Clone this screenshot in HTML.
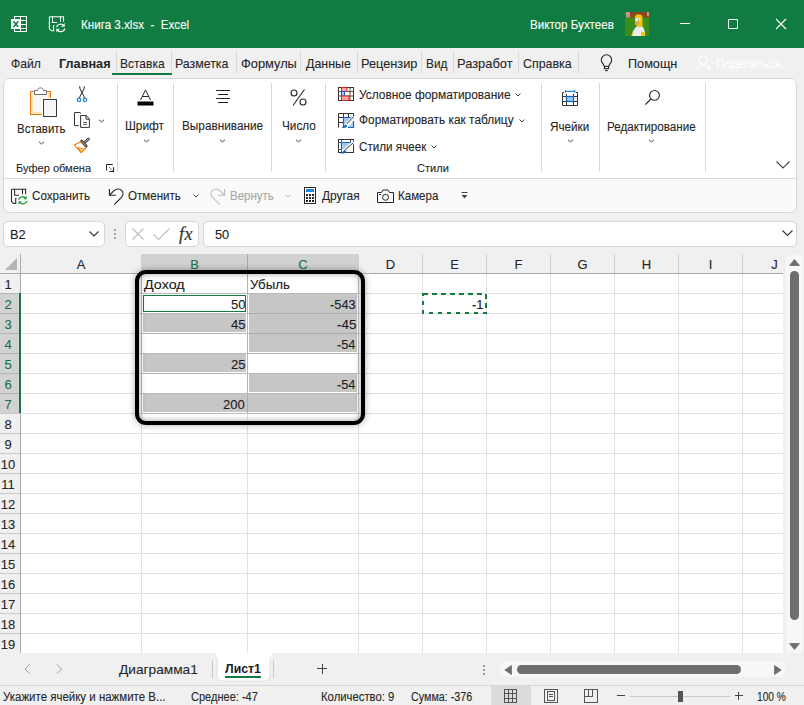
<!DOCTYPE html>
<html><head><meta charset="utf-8">
<style>
*{margin:0;padding:0;box-sizing:border-box}
html,body{width:804px;height:705px;overflow:hidden;background:#f0f0f0;font-family:"Liberation Sans",sans-serif;color:#262626;position:relative}
.a{position:absolute}
.t{position:absolute;white-space:pre;line-height:1;-webkit-text-stroke:0.1px currentColor}
svg{position:absolute;overflow:visible}
#title{left:0;top:0;width:804px;height:48px;background:#107c41}
#title .t{color:#fff}
.sep{position:absolute;width:1px;background:#d4d4d4}
</style></head><body>
<!-- TITLE BAR -->
<div id="title" class="a">
  <svg style="left:10px;top:15px" width="18" height="18" viewBox="0 0 18 18" fill="none" stroke="#fff" stroke-width="1">
    <rect x="4.5" y="1.5" width="12" height="15" />
    <line x1="4.5" y1="5.5" x2="16.5" y2="5.5"/><line x1="4.5" y1="9.5" x2="16.5" y2="9.5"/><line x1="4.5" y1="13.5" x2="16.5" y2="13.5"/>
    <line x1="10.5" y1="1.5" x2="10.5" y2="16.5"/>
    <rect x="1" y="4" width="9.3" height="10" fill="#fff" stroke="none"/>
    <path d="M3.5 6.3 L8.3 12.1 M8.3 6.3 L3.5 12.1" stroke="#107c41" stroke-width="1.5"/>
  </svg>
  <svg style="left:44px;top:12px" width="24" height="24" viewBox="0 0 24 24" fill="none">
  <g transform="translate(1.9,-0.5)">
  <path d="M3.5 5.2 H17.6 V10.3 M3.5 5.2 V17.3 L5.5 19.3 H8.5" stroke="#fff" stroke-width="1.1"/>
  <path d="M6.6 5.2 V11 H11 M14.6 5.2 V10.3 M8.6 14 H7.6 V19.3" stroke="#fff" stroke-width="1.1"/>
  <path d="M10.6 15.6 A4.3 4.3 0 0 1 18 14.2 M19 17 A4.3 4.3 0 0 1 11.5 18.6" stroke="#fff" stroke-width="1.2"/>
  <path d="M18.8 11.6 V15.3 H15.2 Z M10.4 20.8 V17.2 H14 Z" fill="#fff"/>
  </g>
</svg>
  <svg style="left:625px;top:12px" width="24" height="24" viewBox="0 0 24 24">
    <rect width="24" height="24" fill="#3c8c1c"/>
    <rect width="24" height="5.5" fill="#8a4526"/>
    <rect x="1" y="0" width="4" height="5.5" fill="#c49a76"/>
    <rect x="22" y="0" width="2" height="4" fill="#c49a76"/>
    <rect x="0" y="1" width="1" height="1.5" fill="#f07010"/>
    <path d="M10 5 C10 1.5 17.5 1.2 17.5 5.5 V14 H12 V13.5 C10 13.5 9.5 11 10 9 Z" fill="#f5c400"/>
    <ellipse cx="12.8" cy="7.5" rx="2.8" ry="1.6" fill="#f4f4f4"/>
    <circle cx="13.6" cy="7.8" r="0.6" fill="#333"/>
    <path d="M10 9.5 C9.8 12.5 11 14 13.5 14 C14.8 13 14.5 10.5 13.5 9.5 Z" fill="#caa860"/>
    <rect x="12" y="12.5" width="5" height="3" fill="#f5c400"/>
    <path d="M11 14.8 H18 L20 20 L19.8 24 H6.3 L8 19 Z" fill="#ececec"/>
    <rect x="16.2" y="20" width="3.4" height="4" fill="#f5c400"/>
    <rect x="7" y="21" width="1.2" height="2" fill="#f5c400"/>
  </svg>
  <div class="a" style="left:680px;top:23px;width:10px;height:1px;background:#fff"></div>
  <div class="a" style="left:728px;top:19px;width:10px;height:10px;border:1px solid #fff;border-radius:1px"></div>
  <svg style="left:776px;top:19px" width="10" height="10" viewBox="0 0 10 10" stroke="#fff" stroke-width="1.1"><path d="M0 0 L10 10 M10 0 L0 10"/></svg>
</div>

<!-- TAB ROW -->
<div class="sep" style="left:116px;top:51px;height:22px;background:#d9d9d9"></div>
<div class="sep" style="left:171px;top:51px;height:22px;background:#d9d9d9"></div>
<div class="sep" style="left:236px;top:51px;height:22px;background:#d9d9d9"></div>
<div class="sep" style="left:300px;top:51px;height:22px;background:#d9d9d9"></div>
<div class="sep" style="left:357px;top:51px;height:22px;background:#d9d9d9"></div>
<div class="sep" style="left:421px;top:51px;height:22px;background:#d9d9d9"></div>
<div class="sep" style="left:453px;top:51px;height:22px;background:#d9d9d9"></div>
<div class="sep" style="left:518px;top:51px;height:22px;background:#d9d9d9"></div>
<div class="sep" style="left:578px;top:51px;height:22px;background:#d9d9d9"></div>
<div class="a" style="left:112px;top:73px;width:60px;height:2px;background:#107c41"></div>
<svg style="left:594px;top:52px" width="24" height="24" viewBox="0 0 24 24" fill="none" stroke="#262626" stroke-width="1.1">
  <path d="M10.4 14.2 L9 11.8 C7.8 10.3 7.3 9.2 7.3 8 A5.2 5.2 0 0 1 17.7 8 C17.7 9.2 17.2 10.3 16 11.8 L14.6 14.2"/>
  <rect x="10.4" y="14.4" width="4.2" height="2.2"/>
  <path d="M11.2 18.5 H13.8" stroke-width="1.2"/>
</svg>
<svg style="left:696px;top:55px" width="17" height="16" viewBox="0 0 17 16" fill="none" stroke="#ffffff" stroke-width="1.2">
  <circle cx="7" cy="5" r="4"/><path d="M1 15.5 C1 11.5 4 9.5 7 9.5 C8.5 9.5 9.5 10 10.5 10.5"/>
  <path d="M13 10 V16 M10 13 H16"/>
</svg>

<!-- RIBBON -->
<div class="a" style="left:3px;top:78px;width:794px;height:135px;border:1px solid #d6d6d6;border-radius:7px;background:#fafafa;overflow:hidden">
  <div class="a" style="left:0;top:0;width:792px;height:100px;background:#fff;border-bottom:1px solid #d9d9d9"></div>
</div>
<div class="sep" style="left:117px;top:83px;height:89px;background:#d9d9d9"></div>
<div class="sep" style="left:173px;top:83px;height:89px;background:#d9d9d9"></div>
<div class="sep" style="left:271px;top:83px;height:89px;background:#d9d9d9"></div>
<div class="sep" style="left:325px;top:83px;height:89px;background:#d9d9d9"></div>
<div class="sep" style="left:541px;top:83px;height:89px;background:#d9d9d9"></div>
<div class="sep" style="left:599px;top:83px;height:89px;background:#d9d9d9"></div>
<div class="sep" style="left:705px;top:83px;height:89px;background:#d9d9d9"></div>

<!-- clipboard group -->
<svg style="left:26px;top:84px" width="34" height="36" viewBox="0 0 34 36" fill="none">
  <rect x="4.5" y="7.5" width="20" height="23" fill="#f8f8f8" stroke="#e8740c" stroke-width="1"/>
  <path d="M6 9 V29 H16 M23 9 V14" stroke="#fbe0a0" stroke-width="1.6"/>
  <path d="M8.5 10.5 V6.5 H11.5 C11.5 3 17.5 3 17.5 6.5 H20.5 V10.5 Z" fill="#fff" stroke="#6e6e6e" stroke-width="1"/>
  <rect x="16" y="14" width="16" height="19" fill="#fff"/>
  <rect x="17.5" y="15.5" width="13" height="17" fill="#f6f6f6" stroke="#3a3a3a" stroke-width="1"/>
</svg>
<svg style="left:38px;top:141px" width="7" height="4" viewBox="0 0 7 4" fill="none" stroke="#444" stroke-width="1"><path d="M1 0.8 L3.5 3 L6 0.8"/></svg>
<svg style="left:72px;top:82px" width="20" height="22" viewBox="0 0 20 22" fill="none">
  <path d="M7.5 4.3 C7.5 6.5 8.5 8 10 10.5 C11.5 13 12 14 12.5 16" stroke="#3a3a3a" stroke-width="1.05"/>
  <path d="M12.5 4.3 C12.5 6.5 11.5 8 10 10.5 C8.5 13 8 14 7.5 16" stroke="#3a3a3a" stroke-width="1.05"/>
  <rect x="5.3" y="16.2" width="3.4" height="3.4" rx="1.5" fill="#d9ecfb" stroke="#1e88d8" stroke-width="1.2"/>
  <rect x="11.3" y="16.2" width="3.4" height="3.4" rx="1.5" fill="#d9ecfb" stroke="#1e88d8" stroke-width="1.2"/>
</svg>
<svg style="left:70px;top:108px" width="24" height="24" viewBox="0 0 24 24" fill="none" stroke="#333" stroke-width="1">
  <path d="M8.8 17.6 H4.5 V4.5 H9.8 L11.2 5.5"/>
  <path d="M10.6 7.5 H16 L19.4 10.8 V19.4 H10.6 Z" fill="#fff"/>
  <path d="M16 7.5 V11.2 H19.4"/>
  <path d="M13.2 14.4 H16.8 M13.2 16.4 H16.8" stroke-width="0.9"/>
</svg>
<svg style="left:98px;top:119px" width="7" height="4" viewBox="0 0 7 4" fill="none" stroke="#444" stroke-width="1"><path d="M1 0.8 L3.5 3 L6 0.8"/></svg>
<svg style="left:70px;top:134px" width="24" height="24" viewBox="0 0 24 24" fill="none">
  <path d="M10.8 7.8 L4.3 11 L11.2 18.6 L16.2 13.6 Z" fill="#fff" stroke="#e8740c" stroke-width="1.1" stroke-linejoin="round"/>
  <path d="M8 13.5 L14.5 15.3 L11.2 18.4 Z" fill="#f9d97a" stroke="#e8740c" stroke-width="0.9"/>
  <path d="M14 9.3 L18.6 4.8" stroke="#333" stroke-width="2.6" stroke-linecap="round"/>
  <path d="M14 9.3 L18.6 4.8" stroke="#fff" stroke-width="0.9" stroke-linecap="round"/>
  <path d="M11.6 6.8 L16.3 12" stroke="#333" stroke-width="2.4" stroke-linecap="round"/>
  <path d="M11.8 7.2 L16 11.7" stroke="#fff" stroke-width="0.7"/>
</svg>
<svg style="left:102px;top:160px" width="16" height="16" viewBox="0 0 16 16" fill="none" stroke="#262626">
  <path d="M4.5 10.5 V4.5 H10.8" stroke-width="1"/>
  <path d="M7.4 7.4 L10.8 10.8" stroke-width="1" stroke-dasharray="0.9 0.6"/>
  <path d="M7.3 11.5 H11.5 V7.3" stroke-width="1.1"/>
</svg>

<!-- font group -->
<svg style="left:137px;top:89px" width="17" height="17" viewBox="0 0 17 17" fill="none">
  <path d="M3.5 11 L8.5 1 L13.5 11 M5.2 7.5 H11.8" stroke="#262626" stroke-width="1"/>
  <rect x="0.5" y="12.5" width="16" height="4" fill="#000"/>
</svg>
<svg style="left:143px;top:139px" width="7" height="4" viewBox="0 0 7 4" fill="none" stroke="#444" stroke-width="1"><path d="M1 0.8 L3.5 3 L6 0.8"/></svg>

<!-- align group -->
<svg style="left:215px;top:90px" width="16" height="15" viewBox="0 0 16 15" fill="none" stroke="#262626" stroke-width="1">
  <path d="M1 0.5 H15 M3 4.5 H13 M1 8.5 H15 M3 12.5 H13"/>
</svg>
<svg style="left:219px;top:139px" width="7" height="4" viewBox="0 0 7 4" fill="none" stroke="#444" stroke-width="1"><path d="M1 0.8 L3.5 3 L6 0.8"/></svg>

<!-- number group -->
<svg style="left:290px;top:89px" width="18" height="17" viewBox="0 0 18 17" fill="none" stroke="#262626" stroke-width="1.1">
  <circle cx="4" cy="4" r="3"/><circle cx="13" cy="13" r="3"/><path d="M14.5 0.5 L3 16.5"/>
</svg>
<svg style="left:295px;top:139px" width="7" height="4" viewBox="0 0 7 4" fill="none" stroke="#444" stroke-width="1"><path d="M1 0.8 L3.5 3 L6 0.8"/></svg>

<!-- styles group -->
<svg style="left:338px;top:87px" width="17" height="15" viewBox="0 0 17 15" fill="none">
  <rect x="0.5" y="0.5" width="15" height="13" fill="#fff" stroke="#333" stroke-width="1"/>
  <path d="M0.5 4.5 H15.5 M0.5 9 H15.5 M12 0.5 V13.5" stroke="#555" stroke-width="1"/>
  <rect x="3.5" y="0.5" width="5.5" height="4" fill="#f6a3a3" stroke="#e3241b" stroke-width="1"/>
  <rect x="3.5" y="4.5" width="3" height="4.5" fill="#9dcaf2" stroke="#1565c0" stroke-width="1"/>
  <rect x="3.5" y="9" width="7.5" height="4.5" fill="#f6a3a3" stroke="#e3241b" stroke-width="1"/>
</svg>
<svg style="left:515px;top:93px" width="6" height="4" viewBox="0 0 6 4" fill="none" stroke="#444" stroke-width="1"><path d="M0.5 0.5 L3 3 L5.5 0.5"/></svg>
<svg style="left:338px;top:113px" width="17" height="16" viewBox="0 0 17 16" fill="none">
  <path d="M0.5 14.5 V0.5 H15.5 V3.5 M0.5 4.5 H5 M0.5 9.5 H5 M5.5 0.5 V4.5 M10.5 0.5 V4.5 M5 4.5 H15" stroke="#333" stroke-width="1"/>
  <path d="M5.5 14 V4.5 H15 M15.5 8 V14.5 H10" stroke="#1466c0" stroke-width="1.2"/>
  <path d="M6 5 H13 L6 12 Z" fill="#9dcaf2"/>
  <path d="M15 9 V14 H10 Z" fill="#9dcaf2"/>
  <path d="M8.5 11 L15.5 4" stroke="#fff" stroke-width="3"/>
  <path d="M9 10.5 L15.5 4" stroke="#555" stroke-width="1.6" stroke-dasharray="1 0.6"/>
  <path d="M3 14.5 C5 14.5 6 12.5 7.5 11.5 L9.5 13 C8.5 14.8 6 15.5 3 14.5 Z" fill="#1466c0"/>
</svg>
<svg style="left:519px;top:119px" width="6" height="4" viewBox="0 0 6 4" fill="none" stroke="#444" stroke-width="1"><path d="M0.5 0.5 L3 3 L5.5 0.5"/></svg>
<svg style="left:338px;top:139px" width="17" height="16" viewBox="0 0 17 16" fill="none">
  <rect x="0.5" y="0.5" width="15" height="13" fill="#fff" stroke="#333" stroke-width="1"/>
  <path d="M0.5 3.5 H3.5 M0.5 10.5 H3.5 M3.5 0.5 V3.5 M12.5 0.5 V3.5 M3.5 13.5 V10.5" stroke="#555" stroke-width="1"/>
  <path d="M3.5 10.5 V3.5 H12.5" stroke="#1466c0" stroke-width="1.2"/>
  <path d="M4 4 H12 L5 10.5 H4 Z" fill="#9dcaf2"/>
  <path d="M6.5 11.5 L16 3" stroke="#fff" stroke-width="3"/>
  <path d="M7 11 L15.5 3.5" stroke="#555" stroke-width="1.6" stroke-dasharray="1 0.6"/>
  <path d="M2 14 C4 14 5 12 6.5 11 L8.5 12.5 C7.5 14.5 5 15.2 2 14 Z" fill="#1466c0"/>
</svg>
<svg style="left:431px;top:145px" width="6" height="4" viewBox="0 0 6 4" fill="none" stroke="#444" stroke-width="1"><path d="M0.5 0.5 L3 3 L5.5 0.5"/></svg>

<!-- cells group -->
<svg style="left:562px;top:89px" width="17" height="18" viewBox="0 0 17 18" fill="none">
  <path d="M3.5 2.4 H12.8 M3.5 1 V3.8 M12.8 1 V3.8" stroke="#1e88d8" stroke-width="1.1"/>
  <path d="M2 3.5 H0.5 V16.5 H15.5 V3.5 H14 M0.5 7.5 H15.5 M0.5 12.5 H15.5 M4.5 5 V16.5 M11.5 5 V16.5" stroke="#333" stroke-width="1"/>
  <rect x="4.5" y="7.5" width="7" height="5" fill="#9dcaf2" stroke="#1466c0" stroke-width="1.3"/>
</svg>
<svg style="left:567px;top:139px" width="7" height="4" viewBox="0 0 7 4" fill="none" stroke="#444" stroke-width="1"><path d="M1 0.8 L3.5 3 L6 0.8"/></svg>

<!-- editing group -->
<svg style="left:640px;top:86px" width="24" height="24" viewBox="0 0 24 24" fill="none" stroke="#262626" stroke-width="1.1">
  <circle cx="14.5" cy="9.35" r="4.9"/><path d="M10.9 13 L5.3 18.7"/>
</svg>
<svg style="left:648px;top:139px" width="7" height="4" viewBox="0 0 7 4" fill="none" stroke="#444" stroke-width="1"><path d="M1 0.8 L3.5 3 L6 0.8"/></svg>

<svg style="left:776px;top:161px" width="14" height="8" viewBox="0 0 14 8" fill="none" stroke="#444" stroke-width="1.1"><path d="M0.5 0.5 L7 7 L13.5 0.5"/></svg>

<!-- QAT -->
<svg style="left:8px;top:184px" width="24" height="24" viewBox="0 0 24 24" fill="none">
  <path d="M3.5 5.2 H17.6 V10.3 M3.5 5.2 V17.6 L5.5 19.5 H8.3" stroke="#262626" stroke-width="1.05"/>
  <path d="M6.6 5.2 V11.3 H11 M14.5 5.2 V10.3 M8.5 14.6 H7.7 V19.5" stroke="#262626" stroke-width="1.05"/>
  <path d="M10.5 15.6 A4.3 4.3 0 0 1 18 14.5 M19 17 A4.3 4.3 0 0 1 11.5 18.2" stroke="#1e9e3e" stroke-width="1.3"/>
  <path d="M18.6 11.8 V15.3 H15.4 Z M10.4 20.6 V17.2 H13.6 Z" fill="#1e9e3e"/>
</svg>
<svg style="left:104px;top:184px" width="24" height="24" viewBox="0 0 24 24" fill="none" stroke="#262626" stroke-width="1.15">
  <path d="M5.4 5 V11.2 H11.8"/><path d="M5.7 11 L10 6.6 C12.5 4.4 16 4.4 17.8 6.6 C19.6 8.6 19.2 11.6 17.2 13.6 L10.2 20.6"/>
</svg>
<svg style="left:193px;top:194px" width="6" height="4" viewBox="0 0 6 4" fill="none" stroke="#444" stroke-width="1"><path d="M0.5 0.5 L3 3 L5.5 0.5"/></svg>
<svg style="left:206px;top:184px" width="24" height="24" viewBox="0 0 24 24" fill="none" stroke="#bdbdbd" stroke-width="1.15">
  <path d="M18.6 5 V11.2 H12.2"/><path d="M18.3 11 L14 6.6 C11.5 4.4 8 4.4 6.2 6.6 C4.4 8.6 4.8 11.6 6.8 13.6 L13.8 20.6"/>
</svg>
<svg style="left:285px;top:194px" width="6" height="4" viewBox="0 0 6 4" fill="none" stroke="#b8b8b8" stroke-width="1"><path d="M0.5 0.5 L3 3 L5.5 0.5"/></svg>
<svg style="left:304px;top:187px" width="12" height="17" viewBox="0 0 12 17" fill="none">
  <rect x="0.5" y="0.5" width="11" height="16" stroke="#262626" stroke-width="1" fill="#fff"/>
  <rect x="2" y="2" width="8" height="3" fill="#1e88e5"/>
  <g fill="#262626"><rect x="2" y="7" width="2" height="2"/><rect x="5" y="7" width="2" height="2"/><rect x="8" y="7" width="2" height="2"/>
  <rect x="2" y="10" width="2" height="2"/><rect x="5" y="10" width="2" height="2"/><rect x="8" y="10" width="2" height="2"/>
  <rect x="2" y="13" width="2" height="2"/><rect x="5" y="13" width="2" height="2"/><rect x="8" y="13" width="2" height="2"/></g>
</svg>
<svg style="left:377px;top:189px" width="17" height="14" viewBox="0 0 17 14" fill="none" stroke="#262626" stroke-width="1">
  <path d="M0.5 3.5 H4.5 L6 1 H11 L12.5 3.5 H16.5 V13.5 H0.5 Z"/><circle cx="8.5" cy="8.3" r="3"/><path d="M2 5.5 H4"/>
</svg>
<svg style="left:461px;top:192px" width="7" height="7" viewBox="0 0 7 7" fill="#444"><rect x="0.5" y="0" width="6" height="1"/><path d="M0.5 3 H6.5 L3.5 6.5 Z"/></svg>

<!-- FORMULA BAR -->
<div class="a" style="left:3px;top:221px;width:102px;height:26px;background:#fff;border:1px solid #d6d6d6;border-radius:5px"></div>
<svg style="left:89px;top:231px" width="10" height="6" viewBox="0 0 10 6" fill="none" stroke="#333" stroke-width="1.1"><path d="M0.5 0.5 L5 5 L9.5 0.5"/></svg>

<div class="a" style="left:114px;top:229px;width:2px;height:2px;background:#8a8a8a;border-radius:1px"></div>
<div class="a" style="left:114px;top:233px;width:2px;height:2px;background:#8a8a8a;border-radius:1px"></div>
<div class="a" style="left:114px;top:237px;width:2px;height:2px;background:#8a8a8a;border-radius:1px"></div>
<div class="a" style="left:125px;top:221px;width:74px;height:26px;background:#fff;border:1px solid #d6d6d6;border-radius:5px"></div>
<svg style="left:132px;top:228px" width="12" height="12" viewBox="0 0 12 12" fill="none" stroke="#bdbdbd" stroke-width="1.1"><path d="M0.5 0.5 L11.5 11.5 M11.5 0.5 L0.5 11.5"/></svg>
<svg style="left:153px;top:228px" width="17" height="12" viewBox="0 0 17 12" fill="none" stroke="#bdbdbd" stroke-width="1.1"><path d="M0.5 6.5 L5.5 11.5 L16.5 0.5"/></svg>
<div class="a" style="left:179px;top:225px;font:italic 18px/1 'Liberation Serif',serif;color:#333;letter-spacing:0.5px;white-space:pre;-webkit-text-stroke:0.2px #333">fx</div>
<div class="a" style="left:203px;top:221px;width:594px;height:26px;background:#fff;border:1px solid #d6d6d6;border-radius:5px"></div>
<svg style="left:782px;top:230px" width="11" height="6" viewBox="0 0 11 6" fill="none" stroke="#333" stroke-width="1.1"><path d="M0.5 0.5 L5.5 5.5 L10.5 0.5"/></svg>
<!-- GRID -->
<div class="a" style="left:21px;top:274px;width:762px;height:379px;background:#fff"></div>
<div class="a" style="left:142px;top:254px;width:216px;height:19px;background:#d2d2d2"></div>
<div class="a" style="left:0px;top:294px;width:20px;height:119px;background:#d2d2d2"></div>
<svg style="left:0;top:0" width="804" height="705" shape-rendering="crispEdges">
<line x1="141.5" y1="274" x2="141.5" y2="653" stroke="#e1e1e1"/>
<line x1="247.5" y1="274" x2="247.5" y2="653" stroke="#e1e1e1"/>
<line x1="358.5" y1="274" x2="358.5" y2="653" stroke="#e1e1e1"/>
<line x1="422.5" y1="274" x2="422.5" y2="653" stroke="#e1e1e1"/>
<line x1="486.5" y1="274" x2="486.5" y2="653" stroke="#e1e1e1"/>
<line x1="550.5" y1="274" x2="550.5" y2="653" stroke="#e1e1e1"/>
<line x1="614.5" y1="274" x2="614.5" y2="653" stroke="#e1e1e1"/>
<line x1="678.5" y1="274" x2="678.5" y2="653" stroke="#e1e1e1"/>
<line x1="742.5" y1="274" x2="742.5" y2="653" stroke="#e1e1e1"/>
<line x1="21" y1="293.5" x2="783" y2="293.5" stroke="#e1e1e1"/>
<line x1="21" y1="313.5" x2="783" y2="313.5" stroke="#e1e1e1"/>
<line x1="21" y1="333.5" x2="783" y2="333.5" stroke="#e1e1e1"/>
<line x1="21" y1="353.5" x2="783" y2="353.5" stroke="#e1e1e1"/>
<line x1="21" y1="373.5" x2="783" y2="373.5" stroke="#e1e1e1"/>
<line x1="21" y1="393.5" x2="783" y2="393.5" stroke="#e1e1e1"/>
<line x1="21" y1="413.5" x2="783" y2="413.5" stroke="#e1e1e1"/>
<line x1="21" y1="433.5" x2="783" y2="433.5" stroke="#e1e1e1"/>
<line x1="21" y1="453.5" x2="783" y2="453.5" stroke="#e1e1e1"/>
<line x1="21" y1="473.5" x2="783" y2="473.5" stroke="#e1e1e1"/>
<line x1="21" y1="493.5" x2="783" y2="493.5" stroke="#e1e1e1"/>
<line x1="21" y1="513.5" x2="783" y2="513.5" stroke="#e1e1e1"/>
<line x1="21" y1="533.5" x2="783" y2="533.5" stroke="#e1e1e1"/>
<line x1="21" y1="553.5" x2="783" y2="553.5" stroke="#e1e1e1"/>
<line x1="21" y1="573.5" x2="783" y2="573.5" stroke="#e1e1e1"/>
<line x1="21" y1="593.5" x2="783" y2="593.5" stroke="#e1e1e1"/>
<line x1="21" y1="613.5" x2="783" y2="613.5" stroke="#e1e1e1"/>
<line x1="21" y1="633.5" x2="783" y2="633.5" stroke="#e1e1e1"/>
<line x1="141.5" y1="254" x2="141.5" y2="273" stroke="#d0d0d0"/>
<line x1="247.5" y1="254" x2="247.5" y2="273" stroke="#a8a8a8"/>
<line x1="358.5" y1="254" x2="358.5" y2="273" stroke="#d0d0d0"/>
<line x1="422.5" y1="254" x2="422.5" y2="273" stroke="#d0d0d0"/>
<line x1="486.5" y1="254" x2="486.5" y2="273" stroke="#d0d0d0"/>
<line x1="550.5" y1="254" x2="550.5" y2="273" stroke="#d0d0d0"/>
<line x1="614.5" y1="254" x2="614.5" y2="273" stroke="#d0d0d0"/>
<line x1="678.5" y1="254" x2="678.5" y2="273" stroke="#d0d0d0"/>
<line x1="742.5" y1="254" x2="742.5" y2="273" stroke="#d0d0d0"/>
<line x1="0" y1="293.5" x2="20" y2="293.5" stroke="#b4b4b4"/>
<line x1="0" y1="313.5" x2="20" y2="313.5" stroke="#b4b4b4"/>
<line x1="0" y1="333.5" x2="20" y2="333.5" stroke="#b4b4b4"/>
<line x1="0" y1="353.5" x2="20" y2="353.5" stroke="#b4b4b4"/>
<line x1="0" y1="373.5" x2="20" y2="373.5" stroke="#b4b4b4"/>
<line x1="0" y1="393.5" x2="20" y2="393.5" stroke="#b4b4b4"/>
<line x1="0" y1="413.5" x2="20" y2="413.5" stroke="#c8c8c8"/>
<line x1="0" y1="433.5" x2="20" y2="433.5" stroke="#c8c8c8"/>
<line x1="0" y1="453.5" x2="20" y2="453.5" stroke="#c8c8c8"/>
<line x1="0" y1="473.5" x2="20" y2="473.5" stroke="#c8c8c8"/>
<line x1="0" y1="493.5" x2="20" y2="493.5" stroke="#c8c8c8"/>
<line x1="0" y1="513.5" x2="20" y2="513.5" stroke="#c8c8c8"/>
<line x1="0" y1="533.5" x2="20" y2="533.5" stroke="#c8c8c8"/>
<line x1="0" y1="553.5" x2="20" y2="553.5" stroke="#c8c8c8"/>
<line x1="0" y1="573.5" x2="20" y2="573.5" stroke="#c8c8c8"/>
<line x1="0" y1="593.5" x2="20" y2="593.5" stroke="#c8c8c8"/>
<line x1="0" y1="613.5" x2="20" y2="613.5" stroke="#c8c8c8"/>
<line x1="0" y1="633.5" x2="20" y2="633.5" stroke="#c8c8c8"/>
<line x1="0" y1="273.5" x2="783" y2="273.5" stroke="#ababab"/>
<line x1="20.5" y1="254" x2="20.5" y2="653" stroke="#ababab"/>
<line x1="20" y1="293" x2="20" y2="413" stroke="#1b7343" stroke-width="2" shape-rendering="auto"/>
<path d="M5 270 L17 258 L17 270 Z" fill="#b4b4b4" shape-rendering="auto"/>
</svg>
<!-- CELLS -->
<div class="a" style="left:141px;top:274px;width:1px;height:139px;background:#b9b9b9"></div>
<div class="a" style="left:247px;top:274px;width:1px;height:139px;background:#b4b4b4"></div>
<div class="a" style="left:358px;top:274px;width:1px;height:139px;background:#c4c4c4"></div>
<div class="a" style="left:141px;top:293px;width:218px;height:1px;background:#b9b9b9"></div>
<div class="a" style="left:141px;top:313px;width:218px;height:1px;background:#b9b9b9"></div>
<div class="a" style="left:141px;top:333px;width:218px;height:1px;background:#b9b9b9"></div>
<div class="a" style="left:141px;top:353px;width:218px;height:1px;background:#b9b9b9"></div>
<div class="a" style="left:141px;top:373px;width:218px;height:1px;background:#b9b9b9"></div>
<div class="a" style="left:141px;top:393px;width:218px;height:1px;background:#b9b9b9"></div>
<div class="a" style="left:141px;top:413px;width:218px;height:1px;background:#b9b9b9"></div>
<div class="a" style="left:143px;top:314px;width:103px;height:18px;background:#c6c6c6"></div>
<div class="a" style="left:249px;top:294px;width:108px;height:58px;background:#c6c6c6"></div>
<div class="a" style="left:143px;top:354px;width:103px;height:18px;background:#c6c6c6"></div>
<div class="a" style="left:249px;top:374px;width:108px;height:18px;background:#c6c6c6"></div>
<div class="a" style="left:143px;top:394px;width:214px;height:18px;background:#c6c6c6"></div>
<div class="a" style="left:249px;top:313px;width:107px;height:1px;background:#adadad"></div>
<div class="a" style="left:249px;top:333px;width:107px;height:1px;background:#adadad"></div>
<div class="a" style="left:247px;top:394px;width:1px;height:18px;background:#adadad"></div>
<div class="a" style="left:143px;top:295px;width:103px;height:17px;border:1px solid #107c41"></div>
<svg style="left:422px;top:293px" width="65" height="21" viewBox="0 0 65 21" shape-rendering="crispEdges"><rect x="1" y="1" width="63" height="19" fill="none" stroke="#107c41" stroke-width="2" stroke-dasharray="4.5 4.5"/></svg>
<div class="a" style="left:134.5px;top:270.3px;width:230px;height:155px;border:4px solid #000;border-radius:11px;box-shadow:0 0 7px rgba(0,0,0,0.34), inset 0 0 6px rgba(0,0,0,0.38)"></div>

<!-- VSCROLL -->
<div class="a" style="left:784px;top:254px;width:20px;height:399px;background:#f0f0f0"></div>
<div class="a" style="left:786px;top:254px;width:17px;height:402px;background:#f7f7f7;border-radius:8px"></div>
<svg style="left:789px;top:259px" width="11" height="7" viewBox="0 0 11 7"><path d="M0.5 6.5 L5.5 0.5 L10.5 6.5 Z" fill="#6e6e6e" stroke="#6e6e6e" stroke-width="0.8" stroke-linejoin="round"/></svg>
<div class="a" style="left:790px;top:271px;width:9px;height:349px;background:#6e6e6e;border-radius:4.5px"></div>
<svg style="left:789px;top:643px" width="11" height="7" viewBox="0 0 11 7"><path d="M0.5 0.5 L5.5 6.5 L10.5 0.5 Z" fill="#6e6e6e" stroke="#6e6e6e" stroke-width="0.8" stroke-linejoin="round"/></svg>

<!-- SHEET TABS -->
<div class="a" style="left:0;top:653px;width:804px;height:32px;background:#f0f0f0"></div>
<svg style="left:24px;top:664px" width="7" height="10" viewBox="0 0 7 10" fill="none" stroke="#a0a0a0" stroke-width="1"><path d="M5.5 0.5 L1 5 L5.5 9.5"/></svg>
<svg style="left:56px;top:664px" width="7" height="10" viewBox="0 0 7 10" fill="none" stroke="#a0a0a0" stroke-width="1"><path d="M1 0.5 L5.5 5 L1 9.5"/></svg>
<div class="sep" style="left:212px;top:660px;height:18px;background:#c8c8c8"></div>
<svg style="left:211px;top:653px" width="64" height="29" viewBox="0 0 64 29">
  <path d="M0 0 H64 A5 5 0 0 0 59 5 V23 A5 5 0 0 1 54 28 H11 A5 5 0 0 1 6 23 V5 A5 5 0 0 0 1 0 Z" fill="#fff" stroke="none"/>
  <path d="M59 5 V23 A5 5 0 0 1 54 28 H11 A5 5 0 0 1 6 23 V5" fill="none" stroke="#e0e0e0" stroke-width="1"/>
</svg>
<div class="a" style="left:225px;top:676px;width:36px;height:2px;background:#107c41"></div>
<div class="sep" style="left:273px;top:660px;height:18px;background:#c8c8c8"></div>
<svg style="left:317px;top:664px" width="10" height="10" viewBox="0 0 10 10" stroke="#444" stroke-width="1" shape-rendering="crispEdges"><path d="M5.5 0 V10 M0 4.5 H10"/></svg>

<!-- HSCROLL -->
<div class="a" style="left:483px;top:665px;width:2px;height:2px;background:#9a9a9a"></div>
<div class="a" style="left:483px;top:669px;width:2px;height:2px;background:#9a9a9a"></div>
<div class="a" style="left:483px;top:673px;width:2px;height:2px;background:#9a9a9a"></div>
<div class="a" style="left:500px;top:661px;width:286px;height:16px;background:#f7f7f7;border-radius:8px"></div>
<svg style="left:504px;top:665px" width="8" height="10" viewBox="0 0 8 10"><path d="M7.5 0.5 L0.8 5 L7.5 9.5 Z" fill="#6e6e6e" stroke="#6e6e6e" stroke-width="0.8" stroke-linejoin="round"/></svg>
<div class="a" style="left:517px;top:665px;width:224px;height:9px;background:#6e6e6e;border-radius:4.5px"></div>
<svg style="left:774px;top:665px" width="8" height="10" viewBox="0 0 8 10"><path d="M0.5 0.5 L7.2 5 L0.5 9.5 Z" fill="#6e6e6e" stroke="#6e6e6e" stroke-width="0.8" stroke-linejoin="round"/></svg>

<!-- STATUS BAR -->
<div class="a" style="left:0;top:685px;width:804px;height:1px;background:#d6d6d6"></div>
<div class="a" style="left:0;top:686px;width:804px;height:19px;background:#f0f0f0"></div>
<div class="a" style="left:491px;top:686px;width:40px;height:19px;background:#dcdcdc"></div>
<svg style="left:504px;top:689px" width="13" height="14" viewBox="0 0 13 14" fill="none" stroke="#555" stroke-width="1" shape-rendering="crispEdges">
  <rect x="0.5" y="0.5" width="12" height="13"/><path d="M4.5 0.5 V13.5 M8.5 0.5 V13.5 M0.5 4.5 H12.5 M0.5 9 H12.5"/>
</svg>
<svg style="left:544px;top:689px" width="14" height="14" viewBox="0 0 14 14" fill="none" stroke="#555" stroke-width="1" shape-rendering="crispEdges">
  <rect x="0.5" y="0.5" width="13" height="13"/><rect x="3.5" y="2.5" width="7" height="9"/><path d="M5 5.5 H9 M5 7.5 H9"/>
</svg>
<svg style="left:584px;top:689px" width="14" height="14" viewBox="0 0 14 14" fill="none" stroke="#555" stroke-width="1" shape-rendering="crispEdges">
  <rect x="0.5" y="0.5" width="13" height="13"/><path d="M4.5 0.5 V7.5 M0.5 7.5 H8.5 V0.5"/>
</svg>
<div class="a" style="left:617px;top:695px;width:8px;height:1px;background:#444"></div>
<div class="a" style="left:630px;top:696px;width:100px;height:1px;background:#c8c8c8"></div>
<div class="a" style="left:678px;top:691px;width:5px;height:11px;background:#555"></div>
<svg style="left:735px;top:692px" width="8" height="8" viewBox="0 0 8 8" stroke="#444" stroke-width="1" shape-rendering="crispEdges"><path d="M3.5 0 V8 M0 3.5 H8"/></svg>
<div class="t" style="left:80.71px;top:18px;font-size:13px;color:#fff;transform:scaleX(0.8934);transform-origin:0 0">Книга 3.xlsx  -  Excel</div>
<div class="t" style="left:529.71px;top:18px;font-size:13px;color:#fff;transform:scaleX(0.8923);transform-origin:0 0">Виктор Бухтеев</div>
<div class="t" style="left:11.20px;top:57px;font-size:13px;color:#262626;transform:scaleX(0.9339);transform-origin:0 0">Файл</div>
<div class="t" style="left:58.50px;top:57px;font-size:13px;color:#262626;font-weight:bold;-webkit-text-stroke:0;transform:scaleX(0.9754);transform-origin:0 0">Главная</div>
<div class="t" style="left:120.08px;top:57px;font-size:13px;color:#262626;transform:scaleX(0.9233);transform-origin:0 0">Вставка</div>
<div class="t" style="left:175.45px;top:57px;font-size:13px;color:#262626;transform:scaleX(0.9509);transform-origin:0 0">Разметка</div>
<div class="t" style="left:241.20px;top:57px;font-size:13px;color:#262626;transform:scaleX(0.9871);transform-origin:0 0">Формулы</div>
<div class="t" style="left:306.30px;top:57px;font-size:13px;color:#262626;transform:scaleX(0.9564);transform-origin:0 0">Данные</div>
<div class="t" style="left:361.02px;top:57px;font-size:13px;color:#262626;transform:scaleX(0.9811);transform-origin:0 0">Рецензир</div>
<div class="t" style="left:426.09px;top:57px;font-size:13px;color:#262626;transform:scaleX(0.9114);transform-origin:0 0">Вид</div>
<div class="t" style="left:457.01px;top:57px;font-size:13px;color:#262626;transform:scaleX(0.9921);transform-origin:0 0">Разработ</div>
<div class="t" style="left:523.00px;top:57px;font-size:13px;color:#262626;transform:scaleX(0.9543);transform-origin:0 0">Справка</div>
<div class="t" style="left:627.63px;top:57px;font-size:13px;color:#262626;transform:scaleX(0.9750);transform-origin:0 0">Помощн</div>
<div class="t" style="left:715.70px;top:57px;font-size:13px;color:#ffffff;transform:scaleX(0.9046);transform-origin:0 0">Поделиться</div>
<div class="t" style="left:16.58px;top:123px;font-size:12.5px;color:#262626;transform:scaleX(0.9170);transform-origin:0 0">Вставить</div>
<div class="t" style="left:15.70px;top:163px;font-size:11.5px;color:#262626;transform:scaleX(0.9613);transform-origin:0 0">Буфер обмена</div>
<div class="t" style="left:125.45px;top:120px;font-size:12.5px;color:#262626;transform:scaleX(0.9480);transform-origin:0 0">Шрифт</div>
<div class="t" style="left:181.56px;top:120px;font-size:12.5px;color:#262626;transform:scaleX(0.9425);transform-origin:0 0">Выравнивание</div>
<div class="t" style="left:281.80px;top:120px;font-size:12.5px;color:#262626;transform:scaleX(0.9417);transform-origin:0 0">Число</div>
<div class="t" style="left:358.60px;top:89px;font-size:12.5px;color:#262626;transform:scaleX(0.9530);transform-origin:0 0">Условное форматирование</div>
<div class="t" style="left:358.60px;top:114px;font-size:12.5px;color:#262626;transform:scaleX(0.9505);transform-origin:0 0">Форматировать как таблицу</div>
<div class="t" style="left:358.60px;top:141px;font-size:12.5px;color:#262626;transform:scaleX(0.9330);transform-origin:0 0">Стили ячеек</div>
<div class="t" style="left:417.30px;top:163px;font-size:11.5px;color:#262626;transform:scaleX(0.9601);transform-origin:0 0">Стили</div>
<div class="t" style="left:550.20px;top:121px;font-size:12.5px;color:#262626;transform:scaleX(0.9346);transform-origin:0 0">Ячейки</div>
<div class="t" style="left:606.87px;top:121px;font-size:12.5px;color:#262626;transform:scaleX(0.9324);transform-origin:0 0">Редактирование</div>
<div class="t" style="left:31.50px;top:189px;font-size:13px;color:#262626;transform:scaleX(0.8978);transform-origin:0 0">Сохранить</div>
<div class="t" style="left:128.40px;top:189px;font-size:13px;color:#262626;transform:scaleX(0.8905);transform-origin:0 0">Отменить</div>
<div class="t" style="left:229.82px;top:189px;font-size:13px;color:#a6a6a6;transform:scaleX(0.8838);transform-origin:0 0">Вернуть</div>
<div class="t" style="left:321.90px;top:189px;font-size:13px;color:#262626;transform:scaleX(0.9154);transform-origin:0 0">Другая</div>
<div class="t" style="left:397.61px;top:189px;font-size:13px;color:#262626;transform:scaleX(0.8872);transform-origin:0 0">Камера</div>
<div class="t" style="left:9.71px;top:228px;font-size:13px;color:#1a1a1a;transform:scaleX(0.9884);transform-origin:0 0">B2</div>
<div class="t" style="left:215.00px;top:228px;font-size:13px;color:#1a1a1a;transform:scaleX(0.9838);transform-origin:0 0">50</div>
<div class="t" style="left:144.00px;top:278px;font-size:13.5px;color:#1a1a1a;transform:scaleX(1.0608);transform-origin:0 0">Доход</div>
<div class="t" style="left:250.40px;top:278px;font-size:13.5px;color:#1a1a1a;transform:scaleX(0.9805);transform-origin:0 0">Убыль</div>
<div class="t" style="left:230.50px;top:298px;font-size:13.5px;color:#1a1a1a;transform:scaleX(0.9650);transform-origin:0 0">50</div>
<div class="t" style="left:230.50px;top:318px;font-size:13.5px;color:#1a1a1a;transform:scaleX(0.9650);transform-origin:0 0">45</div>
<div class="t" style="left:230.50px;top:358px;font-size:13.5px;color:#1a1a1a;transform:scaleX(0.9650);transform-origin:0 0">25</div>
<div class="t" style="left:223.30px;top:398px;font-size:13.5px;color:#1a1a1a;transform:scaleX(0.9629);transform-origin:0 0">200</div>
<div class="t" style="left:330.30px;top:298px;font-size:13.5px;color:#1a1a1a;transform:scaleX(0.9505);transform-origin:0 0">-543</div>
<div class="t" style="left:336.60px;top:318px;font-size:13.5px;color:#1a1a1a;transform:scaleX(0.9945);transform-origin:0 0">-45</div>
<div class="t" style="left:336.60px;top:338px;font-size:13.5px;color:#1a1a1a;transform:scaleX(0.9448);transform-origin:0 0">-54</div>
<div class="t" style="left:336.60px;top:378px;font-size:13.5px;color:#1a1a1a;transform:scaleX(0.9448);transform-origin:0 0">-54</div>
<div class="t" style="left:472.20px;top:298px;font-size:13.5px;color:#1a1a1a;transform:scaleX(0.9569);transform-origin:0 0">-1</div>
<div class="t" style="left:119.30px;top:663px;font-size:13.5px;color:#262626;transform:scaleX(1.0142);transform-origin:0 0">Диаграмма1</div>
<div class="t" style="left:225.00px;top:662px;font-size:13px;color:#1a1a1a;font-weight:bold;-webkit-text-stroke:0;transform:scaleX(0.9467);transform-origin:0 0">Лист1</div>
<div class="t" style="left:2.50px;top:691px;font-size:12px;color:#262626;transform:scaleX(0.9565);transform-origin:0 0">Укажите ячейку и нажмите В...</div>
<div class="t" style="left:191.20px;top:691px;font-size:12px;color:#262626;transform:scaleX(0.9197);transform-origin:0 0">Среднее: -47</div>
<div class="t" style="left:321.00px;top:691px;font-size:12px;color:#262626;transform:scaleX(0.9423);transform-origin:0 0">Количество: 9</div>
<div class="t" style="left:411.30px;top:691px;font-size:12px;color:#262626;transform:scaleX(0.8964);transform-origin:0 0">Сумма: -376</div>
<div class="t" style="left:756.70px;top:691px;font-size:12px;color:#262626;transform:scaleX(0.8499);transform-origin:0 0">100 %</div>
<div class="t" style="left:51.0px;width:60px;text-align:center;top:258px;font-size:13px;color:#262626">A</div>
<div class="t" style="left:164.5px;width:60px;text-align:center;top:258px;font-size:13px;color:#1d6f45">B</div>
<div class="t" style="left:273.0px;width:60px;text-align:center;top:258px;font-size:13px;color:#1d6f45">C</div>
<div class="t" style="left:360.5px;width:60px;text-align:center;top:258px;font-size:13px;color:#262626">D</div>
<div class="t" style="left:424.5px;width:60px;text-align:center;top:258px;font-size:13px;color:#262626">E</div>
<div class="t" style="left:488.5px;width:60px;text-align:center;top:258px;font-size:13px;color:#262626">F</div>
<div class="t" style="left:552.5px;width:60px;text-align:center;top:258px;font-size:13px;color:#262626">G</div>
<div class="t" style="left:616.5px;width:60px;text-align:center;top:258px;font-size:13px;color:#262626">H</div>
<div class="t" style="left:680.5px;width:60px;text-align:center;top:258px;font-size:13px;color:#262626">I</div>
<div class="t" style="left:744.5px;width:60px;text-align:center;top:258px;font-size:13px;color:#262626">J</div>
<div class="t" style="left:0;width:16px;text-align:center;top:278px;font-size:13px;color:#262626">1</div>
<div class="t" style="left:0;width:16px;text-align:center;top:298px;font-size:13px;color:#1d6f45">2</div>
<div class="t" style="left:0;width:16px;text-align:center;top:318px;font-size:13px;color:#1d6f45">3</div>
<div class="t" style="left:0;width:16px;text-align:center;top:338px;font-size:13px;color:#1d6f45">4</div>
<div class="t" style="left:0;width:16px;text-align:center;top:358px;font-size:13px;color:#1d6f45">5</div>
<div class="t" style="left:0;width:16px;text-align:center;top:378px;font-size:13px;color:#1d6f45">6</div>
<div class="t" style="left:0;width:16px;text-align:center;top:398px;font-size:13px;color:#1d6f45">7</div>
<div class="t" style="left:0;width:16px;text-align:center;top:418px;font-size:13px;color:#262626">8</div>
<div class="t" style="left:0;width:16px;text-align:center;top:438px;font-size:13px;color:#262626">9</div>
<div class="t" style="left:0;width:16px;text-align:center;top:458px;font-size:13px;color:#262626">10</div>
<div class="t" style="left:0;width:16px;text-align:center;top:478px;font-size:13px;color:#262626">11</div>
<div class="t" style="left:0;width:16px;text-align:center;top:498px;font-size:13px;color:#262626">12</div>
<div class="t" style="left:0;width:16px;text-align:center;top:518px;font-size:13px;color:#262626">13</div>
<div class="t" style="left:0;width:16px;text-align:center;top:538px;font-size:13px;color:#262626">14</div>
<div class="t" style="left:0;width:16px;text-align:center;top:558px;font-size:13px;color:#262626">15</div>
<div class="t" style="left:0;width:16px;text-align:center;top:578px;font-size:13px;color:#262626">16</div>
<div class="t" style="left:0;width:16px;text-align:center;top:598px;font-size:13px;color:#262626">17</div>
<div class="t" style="left:0;width:16px;text-align:center;top:618px;font-size:13px;color:#262626">18</div>
<div class="t" style="left:0;width:16px;text-align:center;top:638px;font-size:13px;color:#262626">19</div>
</body></html>
